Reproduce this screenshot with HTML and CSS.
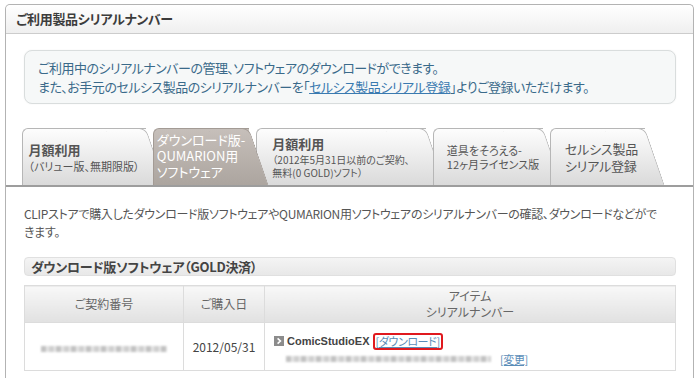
FILE: index.html
```html
<!DOCTYPE html>
<html lang="ja">
<head>
	<meta charset="utf-8">
	<title>ご利用製品シリアルナンバー</title>
	<link rel="stylesheet" href="styles.css">
</head>
<body>
	<div class="panel">
		<div class="panel-head">ご利用製品シリアルナンバー</div>

		<div class="notice">
			ご利用中のシリアルナンバーの管理、ソフトウェアのダウンロードができます。<br>
			また、お手元のセルシス製品のシリアルナンバーを「<a href="#">セルシス製品シリアル登録</a>」よりご登録いただけます。
		</div>

		<ul class="tabs">
			<li class="tab tab-monthly">
				<div class="tab-label"><strong>月額利用</strong><small class="small-wide">（バリュー版、無期限版）</small></div>
			</li>
			<li class="tab tab-download is-active">
				<div class="tab-label">ダウンロード版-<br>QUMARION用<br>ソフトウェア</div>
			</li>
			<li class="tab tab-old">
				<div class="tab-label"><strong>月額利用</strong><small>（2012年5月31日以前のご契約、<br>無料(0 GOLD)ソフト）</small></div>
			</li>
			<li class="tab tab-tools">
				<div class="tab-label tab-label-sm">道具をそろえる-<br>12ヶ月ライセンス版</div>
			</li>
			<li class="tab tab-register">
				<div class="tab-label tab-label-lg">セルシス製品<br>シリアル登録</div>
			</li>
		</ul>

		<div class="content">
			<p class="lead">CLIPストアで購入したダウンロード版ソフトウェアやQUMARION用ソフトウェアのシリアルナンバーの確認、ダウンロードなどがで<br>きます。</p>

			<h2 class="section-title">ダウンロード版ソフトウェア（GOLD決済）</h2>

			<table class="serials">
				<thead>
					<tr>
						<th class="col-contract">ご契約番号</th>
						<th class="col-date">ご購入日</th>
						<th>アイテム<br>シリアルナンバー</th>
					</tr>
				</thead>
				<tbody>
					<tr>
						<td class="cell-center"><span class="blur blur-contract"></span></td>
						<td class="cell-center">2012/05/31</td>
						<td class="cell-item">
							<div class="item-name">
								<svg class="arrow" width="10" height="10" viewBox="0 0 10 10"><rect width="10" height="10" fill="#8c8c8c"/><polyline points="3.6,2.4 6.4,5 3.6,7.6" fill="none" stroke="#fff" stroke-width="1.6"/></svg>
								<strong>ComicStudioEX</strong>
								<span class="highlight"><a href="#">[ダウンロード]</a></span>
							</div>
							<div class="item-serial">
								<span class="blur blur-serial"></span>
								<a href="#">[変更]</a>
							</div>
						</td>
					</tr>
				</tbody>
			</table>
		</div>
	</div>
</body>
</html>
```

FILE: styles.css
```css
html {
	height: 100%;
}

body {
	margin: 0;
	padding: 0;
	background: #ffffff;
	color: #555555;
	font-family: "Noto Sans CJK JP", "Liberation Sans", sans-serif;
	font-feature-settings: "palt";
	font-size: 13px;
}

a {
	color: #3a78ad;
	text-decoration: underline;
}

.panel {
	box-sizing: border-box;
	width: 689px;
	height: 374px;
	margin: 4px 0 0 5px;
	border: 1px solid #b3b3b3;
	border-bottom: 0;
	border-radius: 5px 5px 0 0;
}

.panel-head {
	height: 28px;
	line-height: 28px;
	padding-left: 10px;
	border-bottom: 1px solid #cccccc;
	border-radius: 5px 5px 0 0;
	background: linear-gradient(#ffffff, #efefef);
	color: #3c3c3c;
	font-size: 13px;
	font-weight: bold;
	letter-spacing: -0.3px;
}

.notice {
	margin: 16px 17px 0 18px;
	padding: 7px 13px;
	line-height: 19px;
	border: 1px solid #d9dddd;
	border-radius: 8px;
	background: #f6f8f8;
	box-shadow: 0 0 2px rgba(0,0,0,0.06);
	color: #3a6a8a;
	font-size: 13px;
	letter-spacing: -0.5px;
}

.notice a {
	color: #3a7ab0;
}

/* tabs */

.tabs {
	display: flex;
	height: 57px;
	list-style: none;
	margin: 24px 0 0;
	padding: 0 0 0 16px;
	border-bottom: 2px solid #9d9d9d;
}

.tab {
	position: relative;
	z-index: 0;
	box-sizing: border-box;
	height: 57px;
	margin-left: -13px;
	padding-right: 20px;
	display: flex;
	align-items: center;
	justify-content: center;
}

.tab:first-child {
	margin-left: 0;
}

.tab::before,
.tab::after {
	content: "";
	position: absolute;
	top: 0;
	bottom: 0;
	z-index: -1;
	border: 1px solid #b6b6b6;
	border-bottom: 0;
	background: linear-gradient(#fdfdfd, #dadada);
}

.tab::before {
	left: 0;
	right: 20px;
	border-right: 0;
	border-radius: 6px 0 0 0;
}

.tab::after {
	right: 20px;
	width: 40px;
	border-left: 0;
	border-radius: 0 7px 0 0;
	transform: skewX(19deg);
	transform-origin: 0 0;
}

.tab-monthly { width: 144px; }
.tab-download { width: 116px; }
.tab-old { width: 190px; }
.tab-tools { width: 130px; padding-left: 10px; }
.tab-register { width: 115px; padding-left: 8px; }

.tab.is-active {
	z-index: 1;
}

.tab.is-active::before,
.tab.is-active::after {
	border-color: #a39b95;
	background: linear-gradient(#c6bfba, #aca59f);
}

.tab-label {
	color: #555555;
	font-size: 10px;
	line-height: 13px;
}

.tab-label strong {
	display: block;
	font-size: 13px;
	line-height: 18px;
}

.tab-label small {
	display: block;
	font-size: 10px;
	line-height: 13px;
}

.tab-label .small-wide {
	font-size: 11px;
	line-height: 14px;
}

.is-active .tab-label {
	color: #ffffff;
	font-size: 13px;
	line-height: 16px;
	margin-top: -2px;
}

.tab-label-sm {
	font-size: 11px;
	line-height: 14px;
}

.tab-label-lg {
	font-size: 13px;
	line-height: 17px;
	letter-spacing: -0.2px;
}

/* content */

.content {
	padding: 0 17px 0 18px;
}

.lead {
	margin: 18px 0 0;
	line-height: 18px;
	font-size: 12px;
	letter-spacing: -0.3px;
	color: #555555;
}

.section-title {
	margin: 16px 0 0;
	padding-left: 6px;
	height: 17px;
	line-height: 17px;
	border: 1px solid #e0e0e0;
	border-radius: 4px;
	background: linear-gradient(#f4f4f4, #e8e8e8);
	color: #444444;
	font-size: 13px;
	font-weight: bold;
	letter-spacing: -0.3px;
}

.serials {
	width: 100%;
	margin-top: 9px;
	border-collapse: collapse;
	border: 1px solid #dcdcdc;
}

.serials th {
	height: 36px;
	padding: 0;
	border: 1px solid #dcdcdc;
	background: linear-gradient(#f8f8f8, #e1e1e1);
	color: #666666;
	font-size: 12px;
	font-weight: normal;
	line-height: 16px;
}

.col-contract {
	width: 158px;
}

.col-date {
	width: 80px;
}

.serials td {
	height: 47px;
	padding: 0;
	border: 1px solid #dcdcdc;
	color: #444444;
	font-size: 12px;
}

.cell-center {
	text-align: center;
}

.cell-item {
	padding-left: 9px !important;
	vertical-align: top;
}

.item-name {
	display: flex;
	align-items: center;
	gap: 3px;
	margin-top: 9px;
	height: 18px;
}

.item-name strong {
	font-family: "Liberation Sans", sans-serif;
	font-size: 11px;
	color: #444444;
}

.highlight {
	display: inline-block;
	padding: 0 1px;
	border: 2px solid #e0191e;
	border-radius: 3px;
	line-height: 13px;
	font-size: 11px;
}

.highlight a,
.item-serial a {
	color: #5a8db8;
	font-size: 11px;
	letter-spacing: -0.4px;
}

.item-serial {
	display: flex;
	align-items: center;
	gap: 9px;
	margin: 1px 0 0 12px;
	height: 16px;
}

.blur {
	display: inline-block;
	height: 6px;
	background: repeating-linear-gradient(90deg, #c2c2c2 0 5px, #e4e4e4 5px 8px, #cfcfcf 8px 13px, #e9e9e9 13px 15px);
	filter: blur(1px);
}

.blur-contract {
	width: 126px;
}

.blur-serial {
	width: 205px;
}
```
